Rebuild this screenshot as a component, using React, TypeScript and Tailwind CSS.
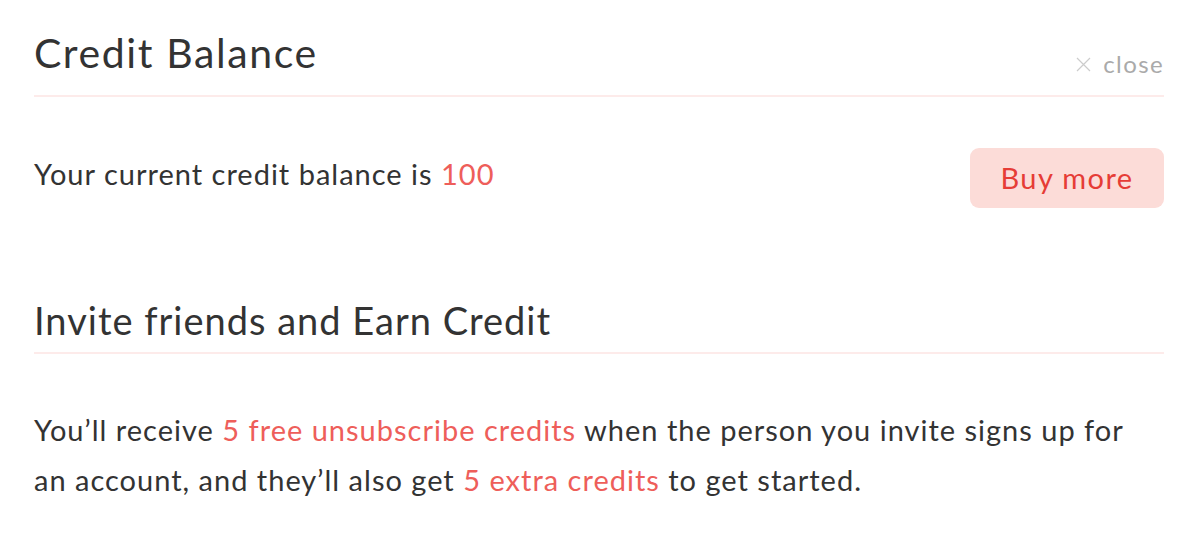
export default function App() {
  return (
    <div
      className="min-h-screen bg-white pl-[34px] pr-[40px] pt-[28px] text-[#333]"
      style={{ fontFamily: 'Lato, "Open Sans", sans-serif' }}
    >
      {/* Credit balance header */}
      <div className="flex items-end justify-between border-b-2 border-[#fdebea] pb-[17px]">
        <h1 className="text-[41px] leading-[50px] font-normal tracking-[1.6px]">Credit Balance</h1>
        <button className="mb-[-4px] flex items-center gap-[12px] text-[24px] tracking-[1.4px] text-[#aaa]">
          <svg width="15" height="15" viewBox="0 0 15 15" className="stroke-[#ccc]">
            <path d="M1 1L14 14M14 1L1 14" strokeWidth="1.2" fill="none" />
          </svg>
          close
        </button>
      </div>

      <div className="mt-[43px] flex items-center justify-between">
        <p className="text-[29px] leading-[40px] tracking-[1px]">
          Your current credit balance is <span className="text-[#ee5e5a]">100</span>
        </p>
        <button className="mt-[8px] h-[60px] w-[194px] rounded-[9px] bg-[#fcdcd8] text-[29px] tracking-[1.4px] text-[#e63c36]">
          Buy more
        </button>
      </div>

      {/* Invite section */}
      <div className="mt-[89px] border-b-2 border-[#fdebea] pb-[9px]">
        <h2 className="text-[38px] leading-[46px] font-normal tracking-[1px]">Invite friends and Earn Credit</h2>
      </div>

      <p className="mt-[51px] text-[29px] leading-[50px] tracking-[1px]">
        You’ll receive <span className="text-[#ee5e5a]">5 free unsubscribe credits</span> when the
        person you invite signs up for an account, and they’ll also get{' '}
        <span className="text-[#ee5e5a]">5 extra credits</span> to get started.
      </p>
    </div>
  );
}
